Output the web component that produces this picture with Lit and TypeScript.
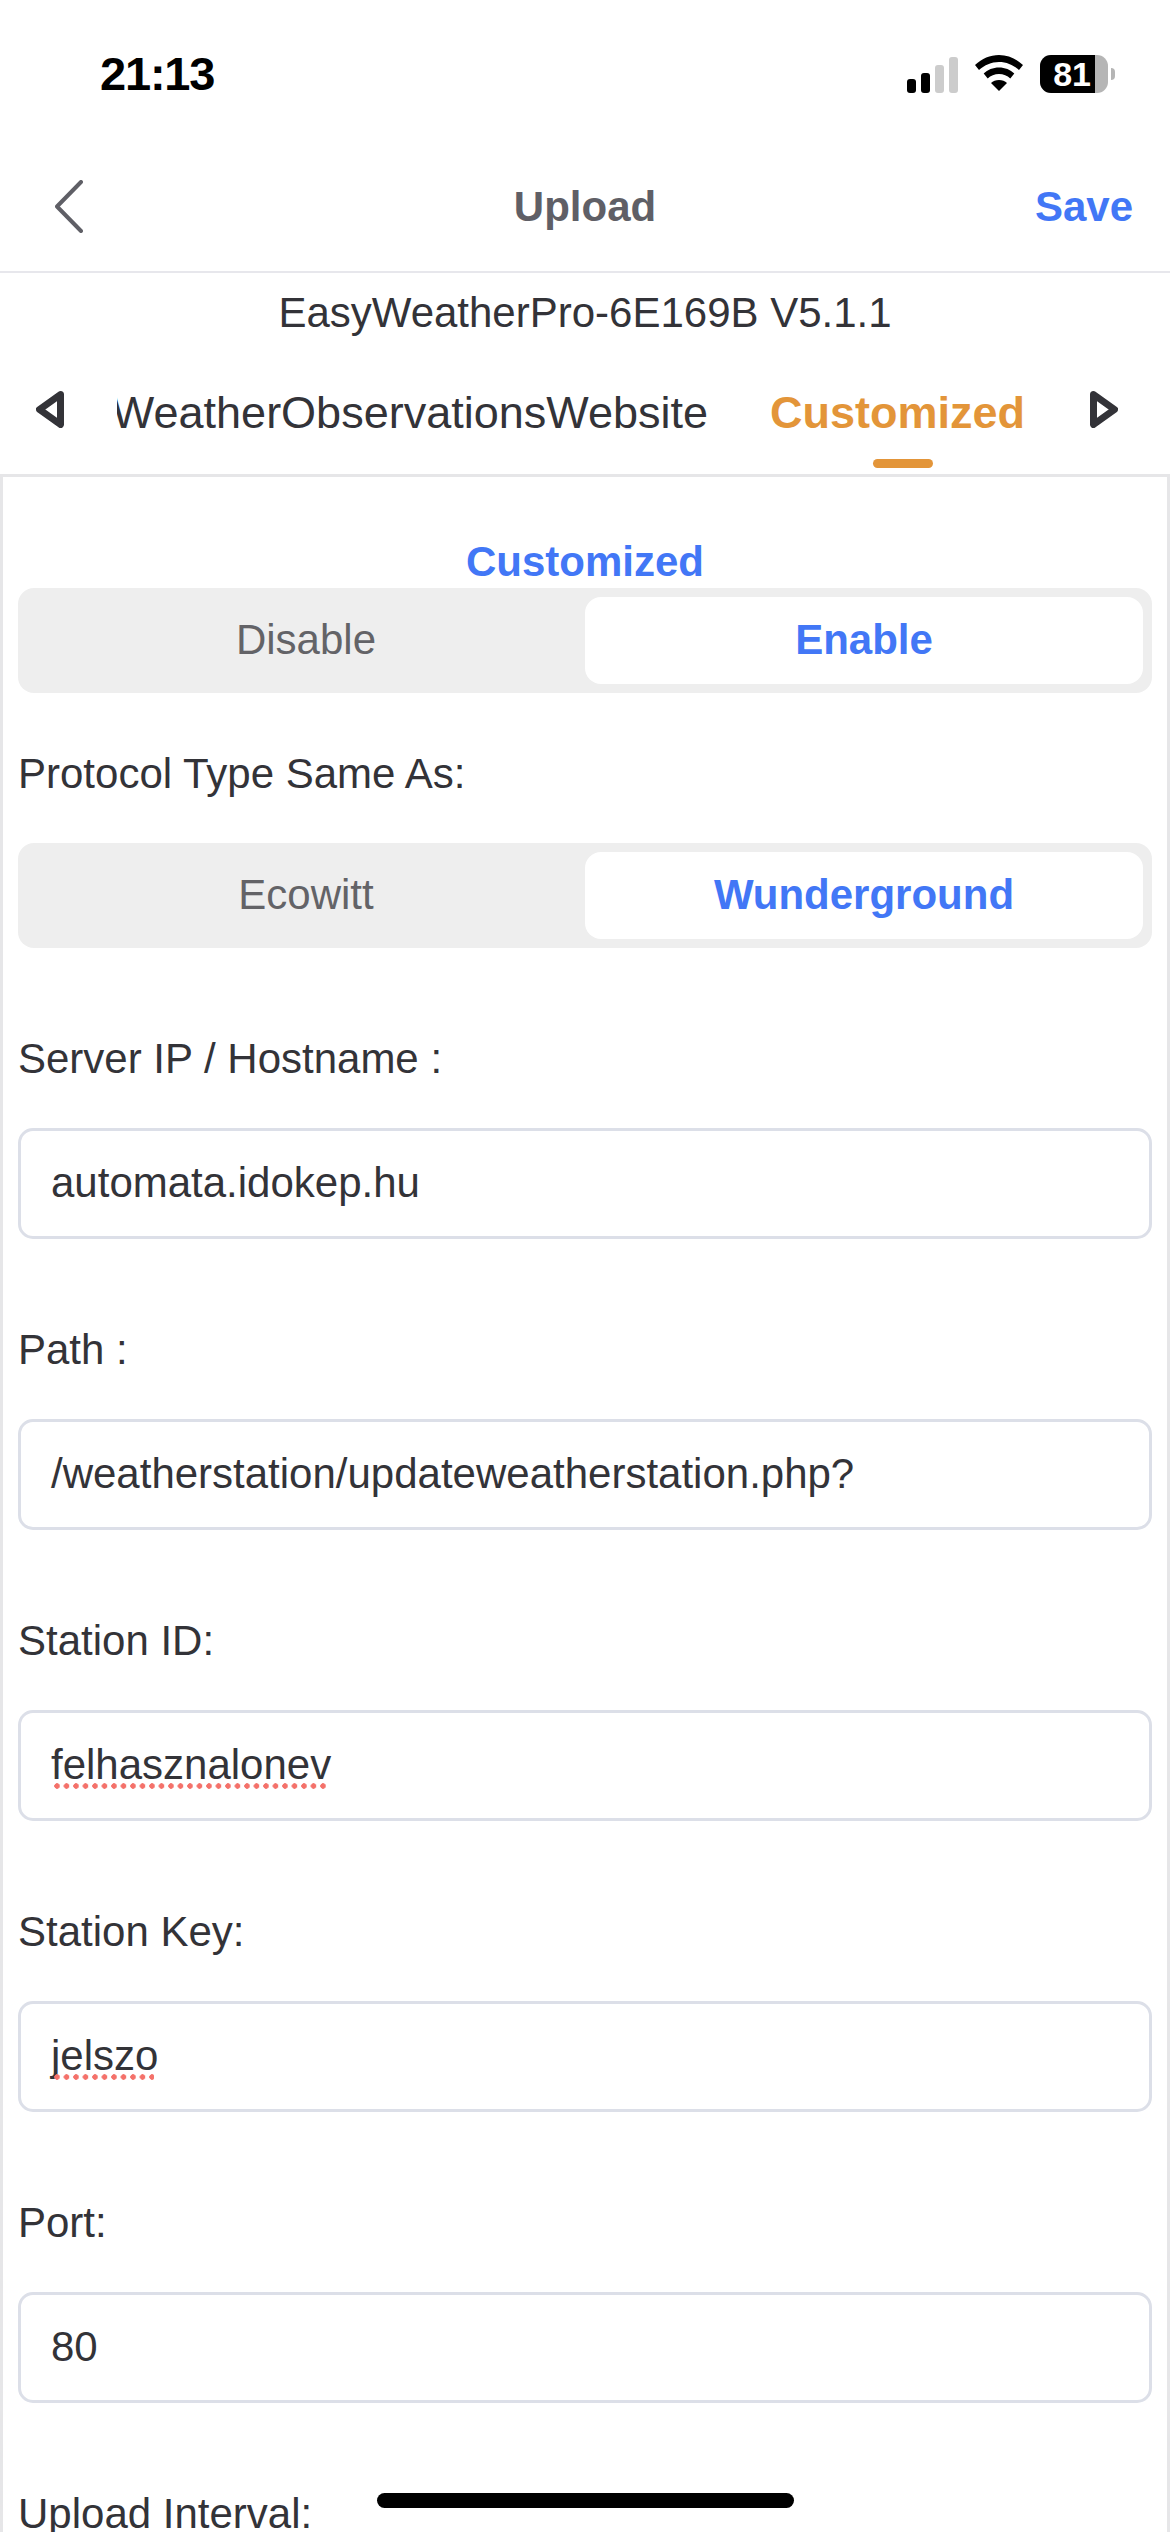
import { LitElement, html, css } from "lit";
import { customElement } from "lit/decorators.js";

@customElement("app-root")
export class AppRoot extends LitElement {
  static styles = css`
    :host {
      display: block;
      position: relative;
      width: 1170px;
      height: 2532px;
      overflow: hidden;
      background: #fff;
      color: #333338;
      font-family: "Liberation Sans", Arial, sans-serif;
      font-size: 42px;
    }
    .status {
      height: 142px;
      display: flex;
      align-items: flex-start;
      box-sizing: border-box;
      padding: 55px 55px 0 100px;
    }
    .time {
      font-weight: 700;
      font-size: 47px;
      line-height: 38px;
      letter-spacing: -1.2px;
      color: #000;
      flex: 1;
    }
    .status-icons {
      display: flex;
      align-items: flex-start;
    }
    .status-icons svg {
      display: block;
    }
    .signal {
      margin-top: 2px;
    }
    .wifi {
      margin: 0 17px;
    }
    .battery {
      width: 68px;
      height: 38px;
      border-radius: 11px;
      overflow: hidden;
      background: #b5b5b5;
    }
    .battery-fill {
      width: 55px;
      height: 38px;
      background: #000;
      color: #fff;
      font-weight: 700;
      font-size: 34px;
      line-height: 38px;
      text-align: right;
      box-sizing: border-box;
      padding-right: 4px;
    }
    .battery-tail {
      width: 4px;
      height: 12px;
      margin: 13px 0 0 3px;
      background: #b5b5b5;
      border-radius: 0 6px 6px 0;
    }
    .nav {
      height: 129px;
      border-bottom: 2px solid #e7e7ec;
      display: grid;
      grid-template-columns: 1fr auto 1fr;
      align-items: center;
      padding: 0 37px;
    }
    .nav svg {
      display: block;
      margin-left: 18px;
    }
    .nav-title {
      font-weight: 700;
      color: #5f5f66;
    }
    .nav-save {
      font-weight: 700;
      color: #4277f6;
      justify-self: end;
    }
    .device {
      padding-top: 10px;
      line-height: 60px;
      text-align: center;
    }
    .tabs {
      height: 131px;
      box-sizing: border-box;
      display: flex;
      align-items: flex-start;
      padding: 40px 52px 0 36px;
      gap: 50px;
      font-size: 45px;
      line-height: 60px;
    }
    .tabs > svg {
      display: block;
      margin-top: 8px;
      flex: none;
    }
    .tab-strip {
      flex: 1;
      min-width: 0;
      margin-left: 3px;
      display: flex;
      justify-content: flex-end;
      gap: 62px;
      overflow: hidden;
      padding-right: 15px;
    }
    .tab {
      flex: none;
      white-space: nowrap;
    }
    .tab.active {
      font-weight: 700;
      color: #e39539;
      display: flex;
      flex-direction: column;
      align-items: center;
    }
    .tab-mark {
      width: 60px;
      height: 9px;
      margin: 16px 0 0 12px;
      border-radius: 5px;
      background: #e39539;
    }
    .panel {
      border: 3px solid #e6e6e8;
      border-bottom: none;
      padding: 0 15px;
      height: 2058px;
      box-sizing: border-box;
    }
    .panel-title {
      padding-top: 61px;
      margin-bottom: 2px;
      line-height: 48px;
      text-align: center;
      font-weight: 700;
      color: #4277f6;
    }
    .seg {
      height: 105px;
      box-sizing: border-box;
      padding: 9px;
      border-radius: 16px;
      background: #eeeeee;
      display: grid;
      grid-template-columns: 1fr 558px;
    }
    .seg div {
      line-height: 85px;
      text-align: center;
      color: #636367;
    }
    .seg div.on {
      background: #fff;
      border-radius: 16px;
      font-weight: 700;
      color: #4277f6;
    }
    .label {
      line-height: 48px;
      margin-top: 87px;
      margin-bottom: 45px;
    }
    .label.first {
      margin-top: 57px;
    }
    .input {
      height: 111px;
      box-sizing: border-box;
      border: 3px solid #dcdfe8;
      border-radius: 15px;
      padding-left: 30px;
      line-height: 103px;
    }
    .spell {
      position: relative;
      display: inline-block;
    }
    .spell::after {
      content: "";
      position: absolute;
      left: 3px;
      right: 4px;
      top: 70px;
      height: 6px;
      background: radial-gradient(circle at 3px 3px, #f4716a 2.5px, transparent 3px) 0 0 / 9.5px 6px repeat-x;
    }
    .home {
      position: absolute;
      left: 377px;
      top: 2493px;
      width: 417px;
      height: 15px;
      border-radius: 8px;
      background: #000;
    }
  `;

  private field(label: string, value: string, spell = false) {
    return html`
      <div class="label">${label}</div>
      <div class="input">${spell ? html`<span class="spell">${value}</span>` : value}</div>
    `;
  }

  render() {
    return html`
      <div class="status">
        <div class="time">21:13</div>
        <div class="status-icons">
          <svg class="signal" width="51" height="36" viewBox="0 0 51 36">
            <rect x="0" y="22" width="9" height="14" rx="3" fill="#000"></rect>
            <rect x="14" y="16" width="9" height="20" rx="3" fill="#000"></rect>
            <rect x="28" y="8" width="9" height="28" rx="3" fill="#ccc"></rect>
            <rect x="42" y="0" width="9" height="36" rx="3" fill="#ccc"></rect>
          </svg>
          <svg class="wifi" width="48" height="36" viewBox="0 0 48 36">
            <path d="M24 0C15 0 7 3.500 0 10l4 5c5.600-5 12.300-8 20-8s14.400 3 20 8l4-5C41 3.500 33 0 24 0z" fill="#000"></path>
            <path d="M24 12.500c-6 0-11.400 2.300-15.300 6l4 5c3-2.800 6.900-4.500 11.300-4.500s8.300 1.700 11.300 4.500l4-5c-3.900-3.700-9.300-6-15.300-6z" fill="#000"></path>
            <path d="M24 25c-3.200 0-6 1.100-8 3l8 8 8-8c-2-1.900-4.800-3-8-3z" fill="#000"></path>
          </svg>
          <div class="battery"><div class="battery-fill">81</div></div>
          <div class="battery-tail"></div>
        </div>
      </div>

      <div class="nav">
        <svg width="28" height="53" viewBox="0 0 28 53">
          <path d="M26 2L2 26.500L26 51" fill="none" stroke="#5f5f66" stroke-width="4" stroke-linecap="round" stroke-linejoin="round"></path>
        </svg>
        <div class="nav-title">Upload</div>
        <div class="nav-save">Save</div>
      </div>

      <div class="device">EasyWeatherPro-6E169B V5.1.1</div>

      <div class="tabs">
        <svg width="28" height="37" viewBox="0 0 28 37">
          <path d="M24.500 3.500L3.500 18.500L24.500 33.500Z" fill="none" stroke="#333338" stroke-width="7" stroke-linejoin="round"></path>
        </svg>
        <div class="tab-strip">
          <div class="tab">WeatherObservationsWebsite</div>
          <div class="tab active">Customized<div class="tab-mark"></div></div>
        </div>
        <svg width="28" height="37" viewBox="0 0 28 37">
          <path d="M3.500 3.500L24.500 18.500L3.500 33.500Z" fill="none" stroke="#333338" stroke-width="7" stroke-linejoin="round"></path>
        </svg>
      </div>

      <div class="panel">
        <div class="panel-title">Customized</div>
        <div class="seg">
          <div>Disable</div>
          <div class="on">Enable</div>
        </div>
        <div class="label first">Protocol Type Same As:</div>
        <div class="seg">
          <div>Ecowitt</div>
          <div class="on">Wunderground</div>
        </div>
        ${this.field("Server IP / Hostname :", "automata.idokep.hu")}
        ${this.field("Path :", "/weatherstation/updateweatherstation.php?")}
        ${this.field("Station ID:", "felhasznalonev", true)}
        ${this.field("Station Key:", "jelszo", true)}
        ${this.field("Port:", "80")}
        <div class="label">Upload Interval:</div>
      </div>

      <div class="home"></div>
    `;
  }
}
